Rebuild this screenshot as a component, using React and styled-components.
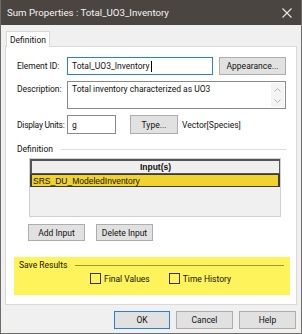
import React from 'react';
import styled, { createGlobalStyle } from 'styled-components';

const GlobalStyle = createGlobalStyle`
  html, body {
    margin: 0;
    padding: 0;
    background: #f0f0f0;
  }
  body {
    font-family: Roboto, 'Noto Sans', sans-serif;
    font-size: 8.5px;
    color: #111;
  }
`;

const Window = styled.div`
  width: 302px;
  height: 334px;
  box-sizing: border-box;
  display: flex;
  flex-direction: column;
  background: #f0f0f0;
  border: 1px solid #6f6b68;
  border-top: none;
`;

const TitleBar = styled.div`
  height: 25px;
  flex: none;
  display: flex;
  align-items: center;
  justify-content: space-between;
  padding: 0 9px 0 6px;
  background: #4b4541;
  color: #f4f4f4;
  font-size: 9.7px;
`;

const CloseIcon = () => (
  <svg width="10" height="10" viewBox="0 0 10 10">
    <path d="M0.5 0.5 L9.5 9.5 M9.5 0.5 L0.5 9.5" stroke="#e8e8e8" strokeWidth="1.1" />
  </svg>
);

const Body = styled.div`
  flex: 1;
  display: flex;
  flex-direction: column;
  padding: 5px 4px 0 4px;
`;

const TabStrip = styled.div`
  display: flex;
  height: 16px;
  padding-left: 1px;
`;

const Tab = styled.div`
  width: 44px;
  box-sizing: border-box;
  background: #fff;
  border: 1px solid #d9d9d9;
  border-bottom: none;
  display: flex;
  align-items: center;
  justify-content: center;
  position: relative;
  top: 1px;
`;

const TabPanel = styled.div`
  height: 259px;
  box-sizing: border-box;
  background: #fff;
  border: 1px solid #d9d9d9;
  padding: 10px 7px 0 11px;
  display: flex;
  flex-direction: column;
`;

const Row = styled.div`
  display: flex;
  align-items: ${p => p.$align || 'center'};
  margin-top: ${p => p.$gap || 0}px;
`;

const Label = styled.div`
  min-width: 50px;
  flex: none;
  white-space: nowrap;
  letter-spacing: ${p => (p.$tight ? '-0.25px' : '-0.05px')};
  padding-top: ${p => p.$top || 0}px;
`;

const TextInput = styled.div`
  box-sizing: border-box;
  width: ${p => p.$w}px;
  height: ${p => p.$h || 18}px;
  border: 1px solid ${p => (p.$focus ? '#2a7fd6' : '#8a8a8a')};
  background: #fff;
  padding: ${p => (p.$multi ? '2px 4px' : '1px 4px')};
  display: flex;
  align-items: ${p => (p.$multi ? 'flex-start' : 'center')};
  white-space: nowrap;
`;

const Caret = styled.span`
  display: inline-block;
  width: 1px;
  height: 11px;
  background: #000;
  margin-left: 1px;
`;

const ScrollArrows = styled.div`
  margin-left: auto;
  width: 13px;
  align-self: stretch;
  display: flex;
  flex-direction: column;
  justify-content: space-between;
  align-items: center;
  padding: 5px 0 4px;
  background: #f4f4f4;
  margin-right: -3px;
  margin-top: -1px;
  margin-bottom: -1px;
`;

const Chevron = ({ up }) => (
  <svg width="7" height="4" viewBox="0 0 7 4">
    <path d={up ? 'M0.5 3.5 L3.5 0.5 L6.5 3.5' : 'M0.5 0.5 L3.5 3.5 L6.5 0.5'} fill="none" stroke="#b5b5b5" strokeWidth="1" />
  </svg>
);

const Button = styled.div`
  box-sizing: border-box;
  width: ${p => p.$w}px;
  height: ${p => p.$h || 18}px;
  margin-left: ${p => p.$ml || 0}px;
  background: #e1e1e1;
  border: 1px solid ${p => (p.$default ? '#2a7fd6' : '#adadad')};
  display: flex;
  align-items: center;
  justify-content: center;
  flex: none;
  white-space: nowrap;
`;

const PlainText = styled.span`
  margin-left: ${p => p.$ml || 0}px;
`;

const GroupHeader = styled.div`
  display: flex;
  align-items: center;
  gap: 8px;
  margin-top: ${p => p.$gap || 0}px;
  padding-right: ${p => p.$pr || 0}px;
  &::after {
    content: '';
    flex: 1;
    height: 1px;
    background: ${p => p.$line || '#dcdcdc'};
  }
`;

const Table = styled.div`
  margin: 4px 0 0 12px;
  width: 252px;
  height: 59px;
  box-sizing: border-box;
  background: #f0f0f0;
  border: 1px solid #d0d0d0;
  font-family: 'Liberation Sans', Arial, sans-serif;
  font-size: 8.5px;
`;

const HeaderCell = styled.div`
  height: 15px;
  box-sizing: border-box;
  border: 1px solid #555;
  border-top-width: 2px;
  border-left-width: 2px;
  background: #efefef;
  font-weight: bold;
  display: flex;
  align-items: center;
  justify-content: center;
`;

const DataRow = styled.div`
  height: 13px;
  box-sizing: border-box;
  border: 1px solid #3c3c3c;
  border-left-width: 2px;
  border-right-width: 2px;
  background: ${p => (p.$selected ? '#f2d22e' : 'transparent')};
  display: flex;
  align-items: center;
  padding-left: 1px;
`;

const ButtonRow = styled.div`
  display: flex;
  margin: 7px 0 0 11px;
`;

const SavePanel = styled.div`
  margin: 16px 0 0 -3px;
  width: 276px;
  height: 38px;
  box-sizing: border-box;
  background: #fff35c;
  padding: 3px 6px 0 5px;
  display: flex;
  flex-direction: column;
`;

const CheckRow = styled.div`
  display: flex;
  margin: 3px 0 0 71px;
  gap: 19px;
`;

const Check = styled.label`
  display: flex;
  align-items: center;
  gap: 3px;
  &::before {
    content: '';
    width: 11px;
    height: 11px;
    box-sizing: border-box;
    border: 1px solid #333;
    background: transparent;
  }
`;

const Footer = styled.div`
  display: flex;
  justify-content: flex-end;
  gap: 6px;
  padding: 6px 1px 0 0;
`;

export default function App() {
  return (
    <>
      <GlobalStyle />
      <Window>
        <TitleBar>
          <span>Sum Properties : Total_UO3_Inventory</span>
          <CloseIcon />
        </TitleBar>
        <Body>
          <TabStrip>
            <Tab>Definition</Tab>
          </TabStrip>
          <TabPanel>
            <Row>
              <Label>Element ID:</Label>
              <TextInput $w={146} $focus>
                Total_UO3_Inventory<Caret />
              </TextInput>
              <Button $w={67} $ml={6}>Appearance...</Button>
            </Row>
            <Row $gap={6} $align="flex-start">
              <Label $top={3}>Description:</Label>
              <TextInput $w={219} $h={28} $multi>
                Total inventory characterized as UO3
                <ScrollArrows>
                  <Chevron up />
                  <Chevron />
                </ScrollArrows>
              </TextInput>
            </Row>
            <Row $gap={6}>
              <Label $tight>Display Units:</Label>
              <TextInput $w={49} $h={19}>g</TextInput>
              <Button $w={48} $h={19} $ml={14}>Type...</Button>
              <PlainText $ml={4}>Vector[Species]</PlainText>
            </Row>
            <GroupHeader $gap={10} $pr={3}>Definition</GroupHeader>
            <Table>
              <HeaderCell>Input(s)</HeaderCell>
              <DataRow $selected>SRS_DU_ModeledInventory</DataRow>
            </Table>
            <ButtonRow>
              <Button $w={57} $h={17}>Add Input</Button>
              <Button $w={57} $h={17} $ml={11}>Delete Input</Button>
            </ButtonRow>
            <SavePanel>
              <GroupHeader $line="#9c9640">Save Results</GroupHeader>
              <CheckRow>
                <Check>Final Values</Check>
                <Check>Time History</Check>
              </CheckRow>
            </SavePanel>
          </TabPanel>
          <Footer>
            <Button $w={56} $default>OK</Button>
            <Button $w={57}>Cancel</Button>
            <Button $w={57}>Help</Button>
          </Footer>
        </Body>
      </Window>
    </>
  );
}
